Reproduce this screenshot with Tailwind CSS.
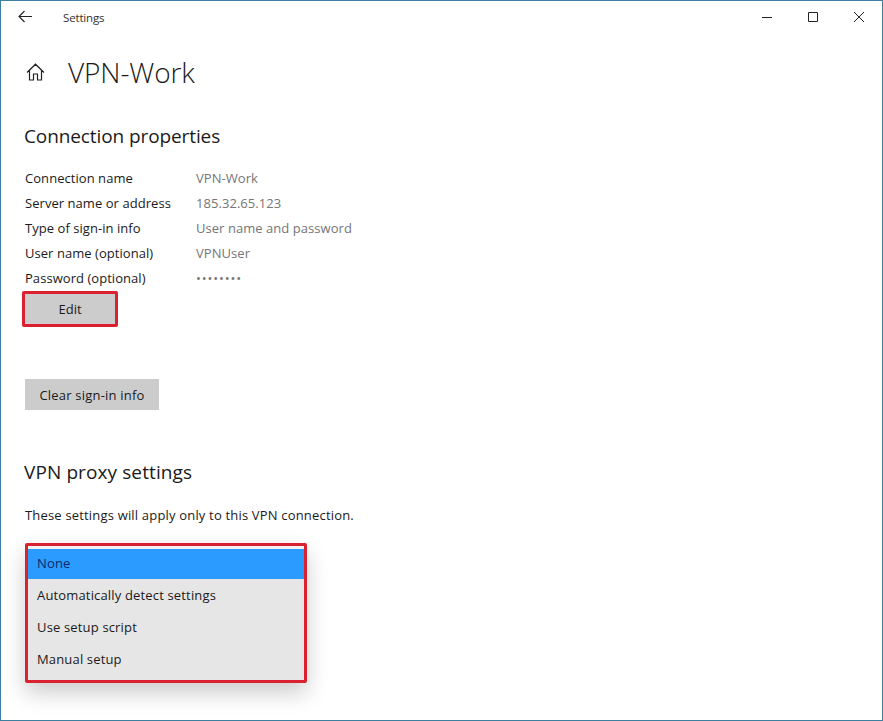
<!DOCTYPE html>
<html lang="en">
<head>
  <meta charset="UTF-8">
  <title>Settings</title>
  <script src="https://cdn.jsdelivr.net/npm/@tailwindcss/browser@4"></script>
</head>
<body class="bg-white">
  <div class="relative w-[883px] h-[721px] overflow-hidden bg-white border border-[#3d7f9f] font-['Open_Sans','Noto_Sans',sans-serif] text-[#1a1a1a]">

    <!-- title bar -->
    <div class="flex items-center h-[31px] pl-[17px]">
      <svg class="w-[15px] h-[13px]" viewBox="0 0 15 13" fill="none" stroke="#222" stroke-width="1.1"><path d="M14 6.5H1M6.5 1 1 6.5 6.5 12"/></svg>
      <span class="ml-[30px] pt-[2px] text-[11.5px] tracking-[-0.15px] text-[#333]">Settings</span>
      <div class="ml-auto flex items-center pr-[18px] gap-[36px]">
        <svg class="w-[10px] h-[10px]" viewBox="0 0 10 10" stroke="#222" stroke-width="1"><path d="M0 5.5h10"/></svg>
        <svg class="w-[10px] h-[10px]" viewBox="0 0 10 10" fill="none" stroke="#222" stroke-width="1"><path d="M.5.5h9v9h-9z"/></svg>
        <svg class="w-[10px] h-[10px]" viewBox="0 0 10 10" stroke="#222" stroke-width="1"><path d="M0 0l10 10M10 0 0 10"/></svg>
      </div>
    </div>

    <!-- page header -->
    <div class="flex items-center mt-[19px] pl-[25px] h-[42px]">
      <svg class="w-[19px] h-[18px]" viewBox="0 0 19 18" fill="none" stroke="#222" stroke-width="1.2"><path d="M1 9.5 9.5 1.2 18 9.5M3.5 7.5V17h4v-6h4v6h4V7.5"/></svg>
      <h1 class="ml-[23px] text-[28px] font-light tracking-[-0.1px]">VPN-Work</h1>
    </div>

    <h2 class="mt-[30px] pl-[23px] text-[19px] leading-[26px] tracking-[-0.1px]">Connection properties</h2>

    <!-- properties -->
    <div class="mt-[17px] pl-[24px] text-[13px] tracking-[0.05px]">
      <div class="flex items-center h-[25px]"><span class="w-[171px]">Connection name</span><span class="text-[#767676]">VPN-Work</span></div>
      <div class="flex items-center h-[25px]"><span class="w-[171px]">Server name or address</span><span class="text-[#767676]">185.32.65.123</span></div>
      <div class="flex items-center h-[25px]"><span class="w-[171px]">Type of sign-in info</span><span class="text-[#767676]">User name and password</span></div>
      <div class="flex items-center h-[25px]"><span class="w-[171px]">User name (optional)</span><span class="text-[#767676]">VPNUser</span></div>
      <div class="flex items-center h-[25px]"><span class="w-[171px]">Password (optional)</span><span class="text-[#767676] tracking-[0.85px]">••••••••</span></div>
    </div>

    <div class="ml-[21px] w-[96px] h-[36px] pt-[2px] border-[3px] border-[#dc2030] rounded-[2px] flex items-center justify-center bg-[#cccccc] text-[13px]">Edit</div>

    <div class="mt-[52px] ml-[24px] w-[134px] h-[31px] pt-[2px] flex items-center justify-center bg-[#cccccc] text-[13px] tracking-[0.2px]">Clear sign-in info</div>

    <h2 class="mt-[49px] pl-[23px] text-[19px] leading-[26px] tracking-[0.1px]">VPN proxy settings</h2>

    <p class="mt-[20px] pl-[24px] text-[13px] leading-[20px] tracking-[0.18px]">These settings will apply only to this VPN connection.</p>

    <!-- dropdown -->
    <div class="mt-[18px] ml-[24px] w-[282px] h-[140px] border-[3px] border-[#d8222f] rounded-[2px] bg-[#e6e6e6] shadow-[0_10px_22px_rgba(0,0,0,0.2)] text-[13px] tracking-[0.16px]">
      <div class="h-[3px] bg-[#f2f2f2]"></div>
      <div class="flex items-center h-[30px] pl-[9px] bg-[#2b9bff] text-[#0a2a6b]">None</div>
      <div class="flex items-center h-[32px] pt-[2px] pl-[9px]">Automatically detect settings</div>
      <div class="flex items-center h-[32px] pt-[2px] pl-[9px]">Use setup script</div>
      <div class="flex items-center h-[32px] pt-[2px] pl-[9px]">Manual setup</div>
    </div>
  </div>
</body>
</html>
